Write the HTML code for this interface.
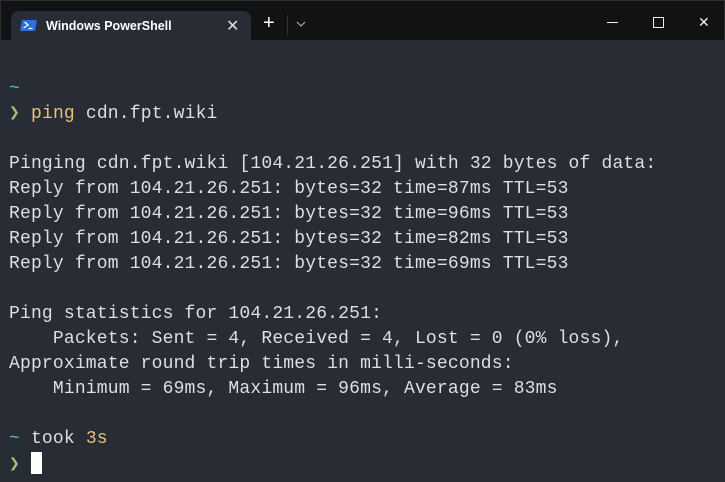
<!DOCTYPE html>
<html><head><style>
html,body{margin:0;padding:0}
body{width:725px;height:482px;background:#282c34;overflow:hidden;position:relative;font-family:"Liberation Sans",sans-serif}
.bar{position:absolute;left:0;top:0;width:725px;height:41px;background:#111213;border:1px solid #2e2e2e;box-sizing:border-box}
.tab{position:absolute;left:10px;top:10px;width:240px;height:31px;background:#282c34;border-radius:8px 8px 0 0}
.tab .t{position:absolute;left:35px;top:8px;color:#fff;font-size:12.5px;font-weight:bold}
.tab .x{position:absolute;left:215px;top:5px;color:#ddd;font-size:16px}
.ico{position:absolute;left:10px;top:9px;width:15px;height:11px;background:#2f6fd8;transform:skewX(-10deg)}
.term{position:absolute;left:9px;top:52px;font-family:"Liberation Mono",monospace;font-size:18px;letter-spacing:0.17px;line-height:25px;color:#dcdfe4;white-space:pre}
.y{color:#e5c07b}.g{color:#98c379}.c{color:#56b6c2}
.cur{display:inline-block;width:11px;height:22px;background:#fff;vertical-align:-5px}
.wb{position:absolute;top:12px;color:#eee;font-size:14px}
</style></head><body>
<div class="bar">
<div class="tab"><div class="ico"><svg width="15" height="11" style="position:absolute;left:0;top:0"><path d="M3 2 L7 5 L3 8" stroke="#fff" stroke-width="1.3" fill="none"/><path d="M8 8.5 H12" stroke="#fff" stroke-width="1.2"/></svg></div><div class="t">Windows PowerShell</div><div class="x">✕</div></div>
<div class="wb" style="left:262px;top:11px;font-size:20px;color:#fff">+</div>
<div style="position:absolute;left:286px;top:14px;width:1px;height:20px;background:#333"></div>
<svg style="position:absolute;left:295px;top:20px" width="10" height="6"><path d="M1 1 L5 5 L9 1" stroke="#bbb" fill="none"/></svg>
<div style="position:absolute;left:606px;top:21px;width:11px;height:1px;background:#eee"></div>
<div style="position:absolute;left:652px;top:16px;width:9px;height:9px;border:1px solid #eee"></div>
<div class="wb" style="left:697px;top:13px">✕</div>
</div>
<div class="term">
<span class="c">~</span>
<span class="g">❯</span> <span class="y">ping</span> cdn.fpt.wiki

Pinging cdn.fpt.wiki [104.21.26.251] with 32 bytes of data:
Reply from 104.21.26.251: bytes=32 time=87ms TTL=53
Reply from 104.21.26.251: bytes=32 time=96ms TTL=53
Reply from 104.21.26.251: bytes=32 time=82ms TTL=53
Reply from 104.21.26.251: bytes=32 time=69ms TTL=53

Ping statistics for 104.21.26.251:
    Packets: Sent = 4, Received = 4, Lost = 0 (0% loss),
Approximate round trip times in milli-seconds:
    Minimum = 69ms, Maximum = 96ms, Average = 83ms

<span class="c">~</span> took <span class="y">3s</span>
<span class="g">❯</span> <span class="cur"></span></div>
</body></html>
